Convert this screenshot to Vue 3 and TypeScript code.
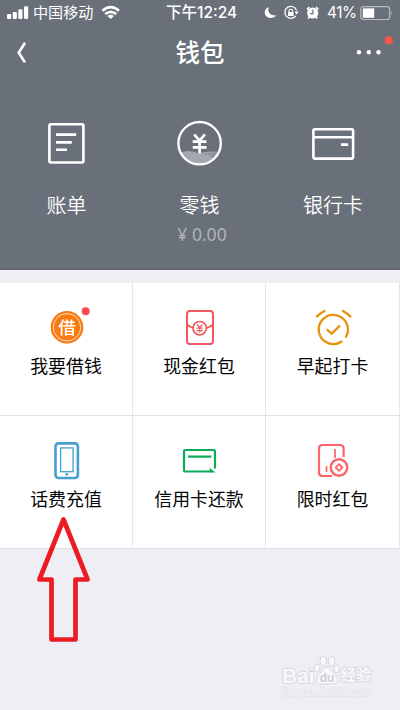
<script setup lang="ts">
interface Service {
  id: string
  label: string
  viewBox: string
}

const services: Service[] = [
  { id: 'loan', label: '我要借钱', viewBox: '0 298 132 54' },
  { id: 'cash', label: '现金红包', viewBox: '133 298 132 54' },
  { id: 'clock', label: '早起打卡', viewBox: '266 298 133 54' },
  { id: 'phone', label: '话费充值', viewBox: '0 431 132 54' },
  { id: 'card', label: '信用卡还款', viewBox: '133 431 132 54' },
  { id: 'limited', label: '限时红包', viewBox: '266 431 133 54' },
]
</script>

<template>
  <main class="screen">
    <header class="hero">
      <div class="status">
        <svg class="signal" viewBox="0 0 33 26" fill="#fff">
          <rect x="7" y="14" width="4.2" height="5" rx="1.2" />
          <rect x="12.700" y="12" width="4.200" height="7" rx="1.200" />
          <rect x="18.300" y="9.300" width="4.200" height="9.700" rx="1.200" />
          <rect x="24" y="6.200" width="4.200" height="12.800" rx="1.200" />
        </svg>
        <span class="carrier">中国移动</span>
        <svg class="wifi" viewBox="100 0 22 26" fill="none" stroke="#fff" stroke-width="2.600">
          <path d="M102.400 10.700Q110.700 3.700 119 10.700" />
          <path d="M105.200 14Q110.700 9.600 116.200 14" />
          <path d="M110.700 18.900l-3.200-3q3.200-2.300 6.400 0z" fill="#fff" stroke="none" />
        </svg>
        <span class="time">下午12:24</span>
        <svg class="indicators" viewBox="260 0 64 26" fill="none" stroke="#fff">
          <path d="M269 7c-4 1.500-5.300 5.500-3.300 8.500c2.500 3.500 8 3.300 10.600-.2c-6 .8-9.600-3.500-7.300-8.300z" fill="#fff" stroke="none" />
          <path d="M296.600 10.500a6 6 0 1 0-.8 5.300" stroke-width="1.300" />
          <path d="M294.500 11.500h4.200l-2.100 3z" fill="#fff" stroke="none" />
          <rect x="288" y="12" width="5.600" height="4" rx=".5" fill="#fff" stroke="none" />
          <path d="M289 12v-1a1.800 1.800 0 0 1 3.600 0v1" stroke-width="1.100" />
          <circle cx="312.700" cy="13" r="5.600" fill="#fff" stroke="none" />
          <path d="M307 9.400l2.400-2.300M318.400 9.400L316 7.100M309.300 16.800l-1.200 1.600M316.100 16.800l1.200 1.600" stroke-width="1.600" />
          <path d="M312.900 9.500v4.100h-2.800" stroke="#69707a" stroke-width="1.200" />
        </svg>
        <span class="percent">41%</span>
        <svg class="battery" viewBox="358 0 42 26">
          <rect x="360.800" y="6.700" width="28.800" height="12.800" rx="2.500" fill="none" stroke="#b7bbbf" stroke-width="1.200" />
          <rect x="362.800" y="8.400" width="11.400" height="9.400" fill="#fff" />
          <path d="M391.200 10.700q1.800 2.400 0 4.800z" fill="#b7bbbf" />
        </svg>
      </div>

      <nav class="nav">
        <svg class="nav-icon" viewBox="0 26 60 52">
          <path d="M25 42.800L18.700 52.700L25 62.400" fill="none" stroke="#fff" stroke-width="2.600" />
        </svg>
        <h1>钱包</h1>
        <svg class="nav-icon" viewBox="340 26 60 52" fill="#fff">
          <circle cx="359" cy="52.300" r="2.200" />
          <circle cx="368.800" cy="52.300" r="2.200" />
          <circle cx="378.500" cy="52.300" r="2.200" />
          <circle cx="388.800" cy="40.200" r="4" fill="#ff5745" />
        </svg>
      </nav>

      <section class="accounts">
        <div class="account">
          <svg viewBox="0 116 133 54" fill="none" stroke="#fff" stroke-width="2.600">
            <rect x="49.400" y="124.300" width="34" height="38.200" rx="1.500" />
            <path d="M56 134.600h20.200M56 142.400h15.800M56 149.700h11" />
          </svg>
          <span>账单</span>
        </div>
        <div class="account">
          <svg viewBox="133 116 133 54" fill="none" stroke="#fff">
            <path d="M180 152.500q9-3.500 18 .8q11-2.500 21-1.300q-6 12-19.500 12T180 152.500z" fill="#a5a9af" stroke="none" />
            <path d="M203 154q9-2.500 16-1.500q-2 4-5 6.500q-4-4-11-5z" fill="#8e9399" stroke="none" />
            <circle cx="199.600" cy="143.200" r="21.200" stroke-width="2.300" />
            <path d="M194.200 134.400l5.400 6.200l5.400-6.200M199.600 140.500v13M192.700 141.700h13.800M192.700 147.300h13.800" stroke-width="2.700" />
          </svg>
          <span>零钱</span>
          <small>¥ 0.00</small>
        </div>
        <div class="account">
          <svg viewBox="266 116 134 54" fill="none" stroke="#fff" stroke-width="2.600">
            <rect x="313.400" y="129.200" width="39.700" height="29.400" rx="1.500" />
            <path d="M313 137.300h40M341 144.600h7.200" />
          </svg>
          <span>银行卡</span>
        </div>
      </section>
    </header>

    <section class="services">
      <div v-for="service in services" :key="service.id" class="service">
        <svg :viewBox="service.viewBox" fill="none">
          <g v-if="service.id === 'loan'">
            <circle cx="67" cy="327.300" r="16.300" fill="#f87a10" />
            <circle cx="67" cy="327.300" r="13.700" stroke="#ffe2c6" stroke-width="1" />
            <text class="loan-glyph" x="67" y="333.500" text-anchor="middle">借</text>
            <circle cx="85.700" cy="311.300" r="4" fill="#f94d50" />
          </g>
          <g v-else-if="service.id === 'cash'" stroke="#ef5a61" stroke-width="2">
            <rect x="187" y="311" width="26" height="33" rx="2.700" />
            <path d="M187 324q2 3 6.300 4M213 324q-2 3-6.300 4" />
            <circle cx="199.700" cy="328.200" r="6.700" stroke-width="1.700" />
            <path d="M197 324.500l2.700 3l2.700-3M199.700 327.500v5.200M196.500 328.200h6.400M196.500 330.600h6.400" stroke-width="1.200" />
          </g>
          <g v-else-if="service.id === 'clock'" stroke="#e6930d" stroke-width="2.300" stroke-linecap="round">
            <path d="M341.600 341.500A14.600 14.600 0 1 1 346 336.700" />
            <path d="M327.400 329.800l4.300 3.800l7.700-7.400M317 316.400q3.300-3.300 7.500-5.500M350.400 316.400q-3.300-3.300-7.500-5.500" />
          </g>
          <g v-else-if="service.id === 'phone'" stroke="#459fd0">
            <rect x="55.500" y="443.400" width="22.400" height="34.600" rx="3" stroke-width="2.600" />
            <rect x="60.600" y="447.900" width="12.500" height="23.800" stroke-width="1.300" />
            <circle cx="66.800" cy="474.300" r="1.400" fill="#459fd0" stroke="none" />
          </g>
          <g v-else-if="service.id === 'card'" stroke="#0aac58" stroke-width="2.200">
            <path d="M215 468.500V451.500q0-1.500-1.500-1.500h-28q-1.500 0-1.500 1.500v18.500q0 1.500 1.500 1.500h26M188 456.700h23.300" />
            <path d="M209.500 467.800l6 4.700h-5.500z" fill="#0aac58" stroke="none" />
          </g>
          <g v-else stroke="#fb6568" stroke-width="2.200">
            <path d="M343.600 457v-8.500q0-3.500-3.500-3.500h-17.600q-3.500 0-3.500 3.500v24q0 3.500 3.500 3.500h9.500" />
            <path d="M335 449v9M326.500 466v6" stroke-width="1.700" />
            <circle cx="339" cy="467.500" r="8.200" stroke-width="2.400" />
            <path d="M339 464.200l3.300 3.300l-3.300 3.300l-3.300-3.300z" stroke-width="1.800" />
          </g>
        </svg>
        <span>{{ service.label }}</span>
      </div>
    </section>

    <svg class="arrow" viewBox="30 510 70 140" fill="none" stroke="#ed1c24" stroke-width="4.700">
      <path d="M63.500 519.500L39.400 579.500H51.500V639.500H75.500V579.500H87.600Z" stroke-linejoin="round" />
    </svg>

    <aside class="watermark">
      <div class="brand">
        <b>Bai</b>
        <svg viewBox="0 0 28 32" fill="#f8f8fa" stroke="#d6d6db" stroke-width="1">
          <ellipse cx="4" cy="14" rx="3" ry="4" />
          <ellipse cx="10.300" cy="7" rx="3.200" ry="4.700" />
          <ellipse cx="18.500" cy="7.200" rx="3.200" ry="4.700" />
          <ellipse cx="23.800" cy="15" rx="3" ry="4" />
          <path d="M14 13c-4 0-5 5-9 8.500c-3 4-1 8.500 3 8.500h12c5 0 6-5 3-8.500c-4-3.500-5-8.500-9-8.500z" />
          <text class="paw-text" x="14" y="27.500" text-anchor="middle">du</text>
        </svg>
        <b class="brand-cjk">经验</b>
      </div>
      <span class="site">jingyan.baidu.com</span>
    </aside>
  </main>
</template>

<style>
body {
  margin: 0;
  background: #efeef4;
}
</style>

<style scoped>
.screen {
  position: relative;
  width: 400px;
  height: 710px;
  overflow: hidden;
  background: #efeef4;
  font-family: "Noto Sans CJK SC", sans-serif;
}
svg {
  display: block;
}
.hero {
  box-sizing: border-box;
  height: 271px;
  background: #69707a;
  border-bottom: 1px solid #fafafc;
  box-shadow: inset 0 -1px #5c5c6c;
  color: #fff;
}
.status {
  display: grid;
  grid-template-columns: 33px 67px 22px 44px 94px 64px 34px 42px;
  align-items: center;
  height: 26px;
  white-space: nowrap;
}
.status svg {
  width: 100%;
  height: 26px;
}
.carrier {
  padding-bottom: 3px;
  font-size: 15.100px;
  line-height: 23px;
}
.time {
  grid-column: 5;
  font-size: 15.500px;
  font-weight: 500;
  font-family: Inter, "Noto Sans CJK SC", sans-serif;
  line-height: 26px;
}
.percent {
  padding-left: 3px;
  font-family: Inter, sans-serif;
  font-size: 15.300px;
  letter-spacing: -0.4px;
  line-height: 26px;
}
.nav {
  display: flex;
  align-items: center;
  justify-content: space-between;
  height: 52px;
}
.nav-icon {
  width: 60px;
  height: 52px;
}
h1 {
  margin: 0;
  font-size: 24.500px;
  font-weight: 500;
  line-height: 52px;
}
.accounts {
  display: grid;
  grid-template-columns: 133px 133px 134px;
  padding-top: 38px;
}
.account {
  display: flex;
  flex-direction: column;
  align-items: center;
}
.account svg {
  width: 100%;
  height: 54px;
}
.account span {
  margin-top: 20px;
  font-size: 20px;
  font-weight: 350;
  line-height: 30px;
}
.account small {
  padding-left: 5px;
  margin-top: 1px;
  color: #b0b4b9;
  font-family: "Noto Sans", "Noto Sans CJK SC", sans-serif;
  font-size: 17.500px;
  line-height: 26px;
}
.services {
  display: grid;
  grid-template-columns: 133px 133px 134px;
  grid-auto-rows: 133px;
  margin-top: 11px;
  padding-top: 1px;
  background: linear-gradient(#efeef4 1px, #fff 1px);
}
.service {
  display: flex;
  flex-direction: column;
  align-items: center;
  box-sizing: border-box;
  padding-top: 15px;
  border-right: 1px solid #e7e7e9;
  border-bottom: 1px solid #e0e0e2;
  color: #050505;
}
.service svg {
  width: 100%;
  height: 54px;
}
.service span {
  font-size: 17.900px;
  line-height: 27px;
}
.loan-glyph {
  fill: #fff;
  font-size: 17.500px;
  font-weight: 500;
}
.arrow {
  position: absolute;
  left: 30px;
  top: 510px;
  width: 70px;
  height: 140px;
}
.watermark {
  position: absolute;
  left: 282px;
  top: 655px;
  width: 94px;
  color: #f8f8fa;
  font-family: "Liberation Sans", "Noto Sans CJK SC", sans-serif;
}
.brand {
  display: flex;
  align-items: flex-end;
  height: 31px;
}
.brand b {
  width: 31px;
  font-size: 21px;
  line-height: 20px;
  -webkit-text-stroke: 2px #dadadf;
  paint-order: stroke fill;
}
.brand svg {
  flex: none;
  width: 28px;
  height: 32px;
}
.brand .brand-cjk {
  font-size: 15px;
  line-height: 22px;
}
.paw-text {
  fill: #cfcfd5;
  stroke: none;
  font-size: 12px;
  font-weight: 700;
}
.site {
  display: block;
  color: #f6f6f9;
  font-size: 11px;
  line-height: 13px;
  -webkit-text-stroke: 1.5px #e2e2e7;
  paint-order: stroke fill;
}
</style>
